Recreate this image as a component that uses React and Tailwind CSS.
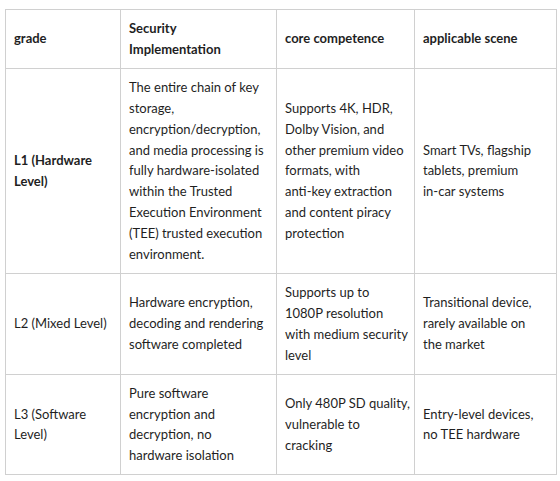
const rows = [
  {
    grade: ['L1 (Hardware', 'Level)'],
    bold: true,
    security: [
      'The entire chain of key',
      'storage,',
      'encryption/decryption,',
      'and media processing is',
      'fully hardware-isolated',
      'within the Trusted',
      'Execution Environment',
      '(TEE) trusted execution',
      'environment.',
    ],
    core: [
      'Supports 4K, HDR,',
      'Dolby Vision, and',
      'other premium video',
      'formats, with',
      'anti-key extraction',
      'and content piracy',
      'protection',
    ],
    scene: ['Smart TVs, flagship', 'tablets, premium', 'in-car systems'],
  },
  {
    grade: ['L2 (Mixed Level)'],
    security: ['Hardware encryption,', 'decoding and rendering', 'software completed'],
    core: ['Supports up to', '1080P resolution', 'with medium security', 'level'],
    scene: ['Transitional device,', 'rarely available on', 'the market'],
  },
  {
    grade: ['L3 (Software', 'Level)'],
    security: ['Pure software', 'encryption and', 'decryption, no', 'hardware isolation'],
    core: ['Only 480P SD quality,', 'vulnerable to', 'cracking'],
    scene: ['Entry-level devices,', 'no TEE hardware'],
  },
]

const cell = 'border border-[#d0d0d0] px-2 py-2 align-middle text-left'

function Lines({ items }) {
  return items.map((l, i) => (
    <span key={i} className="block whitespace-nowrap">
      {l}
    </span>
  ))
}

export default function App() {
  return (
    <div className="w-[560px] h-[481px] bg-white pt-[9px] pl-[5px] font-['Lato',sans-serif] text-[13px] leading-[20.9px] text-[#1f1f1f]">
      <table className="border-collapse table-fixed w-[551px]">
        <colgroup>
          <col className="w-[115px]" />
          <col className="w-[156px]" />
          <col className="w-[138px]" />
          <col className="w-[142px]" />
        </colgroup>
        <thead>
          <tr className="font-bold">
            <th className={cell}>grade</th>
            <th className={cell}>
              <Lines items={['Security', 'Implementation']} />
            </th>
            <th className={cell}>core competence</th>
            <th className={cell}>applicable scene</th>
          </tr>
        </thead>
        <tbody>
          {rows.map((r) => (
            <tr key={r.grade[0]}>
              <td className={`${cell} ${r.bold ? 'font-bold' : ''}`}>
                <Lines items={r.grade} />
              </td>
              <td className={cell}>
                <Lines items={r.security} />
              </td>
              <td className={cell}>
                <Lines items={r.core} />
              </td>
              <td className={cell}>
                <Lines items={r.scene} />
              </td>
            </tr>
          ))}
        </tbody>
      </table>
    </div>
  )
}
